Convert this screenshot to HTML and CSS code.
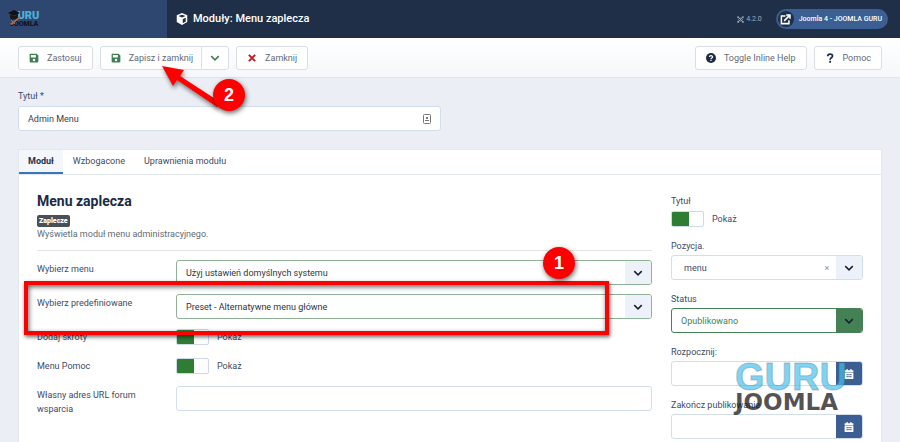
FILE: index.html
```html
<!DOCTYPE html>
<html lang="pl">
<head>
<meta charset="utf-8">
<title>Moduły: Menu zaplecza</title>
<link rel="stylesheet" href="styles.css">
</head>
<body>
<svg class="defs" aria-hidden="true">
  <symbol id="save" viewBox="0 0 16 16"><path fill-rule="evenodd" d="M2 1h10l3 3v9a2 2 0 0 1-2 2H3a2 2 0 0 1-2-2V2a1 1 0 0 1 1-1zm1 2v4h8V3zm5 6a2 2 0 1 0 0 4 2 2 0 0 0 0-4z"/></symbol>
  <symbol id="chevron" viewBox="0 0 16 16"><path d="M2 5l6 6 6-6" fill="none" stroke="currentColor" stroke-width="2.4"/></symbol>
  <symbol id="cross" viewBox="0 0 16 16"><path d="M3 3l10 10M13 3L3 13" stroke="currentColor" stroke-width="3.2"/></symbol>
  <symbol id="calendar" viewBox="0 0 16 16"><path fill-rule="evenodd" d="M4 0h2v2h4V0h2v2h3v3H1V2h3zM1 6h14v10H1zm3 2v2h2V8zm3 0v2h2V8zm3 0v2h2V8zm-6 3v2h2v-2zm3 0v2h2v-2zm3 0v2h2v-2z"/></symbol>
</svg>
<header class="header">
  <a class="logo" href="#" aria-label="Guru Joomla">
    <span class="logo-top">GURU</span><span class="logo-bottom">JOOMLA</span>
    <svg class="logo-cap" viewBox="0 0 16 17"><path d="M0 3l6-3 6 3-6 3z" fill="#111"/><path d="M2 4v4c2 2 6 2 8 0V4L6 6z" fill="#181818"/><path d="M2 14l10-8 1 1-9 8z" fill="#b96b45"/><path d="M3 10l4 4" stroke="#b96b45"/></svg>
  </a>
  <h1 class="page-title"><svg class="cube" viewBox="0 0 16 16"><path fill-rule="evenodd" d="M8 0l7 3v9l-7 4-7-4V3zm0 2.2L3.3 4.1 8 6l4.7-1.9zM9 8v5.5l4-2.2V6.3z"/></svg>Moduły: Menu zaplecza</h1>
  <span class="version"><svg viewBox="0 0 16 16"><path d="M3 3l10 10M13 3L3 13M4 6c-1 2-1 2 0 4M12 6c1 2 1 2 0 4M6 4c2 1 2 1 4 0M6 12c2-1 2-1 4 0" fill="none" stroke="currentColor" stroke-width="2"/><circle cx="2.5" cy="2.5" r="2.2"/><circle cx="13.5" cy="2.5" r="2.2"/><circle cx="2.5" cy="13.5" r="2.2"/><circle cx="13.5" cy="13.5" r="2.2"/></svg>4.2.0</span>
  <a class="site-link" href="#"><span class="site-icon"><svg viewBox="0 0 16 16"><path d="M8 3H2v11h11V9M6 10l8-8M9 1.5h5.5V7" fill="none" stroke="currentColor" stroke-width="2.2"/></svg></span>Joomla 4 - JOOMLA GURU</a>
</header>
<div class="toolbar">
  <button class="btn" type="button"><svg class="icon green"><use href="#save"/></svg>Zastosuj</button>
  <div class="group">
    <button class="btn" type="button"><svg class="icon green"><use href="#save"/></svg>Zapisz i zamknij</button>
    <button class="btn drop" type="button" aria-label="Więcej"><svg class="icon green"><use href="#chevron"/></svg></button>
  </div>
  <button class="btn" type="button"><svg class="icon red"><use href="#cross"/></svg>Zamknij</button>
  <button class="btn push" type="button"><svg class="icon navy" viewBox="0 0 16 16"><circle cx="8" cy="8" r="8"/><path d="M5.5 6.5C5.5 3.4 10.5 3.4 10.5 6.3 10.5 8 8 7.8 8 9.6M8 10.8v2" fill="none" stroke="#fff" stroke-width="2"/></svg>Toggle Inline Help</button>
  <button class="btn" type="button"><svg class="icon navy" viewBox="0 0 16 16"><path d="M4.4 5.2C4.4 .6 12 .8 12 4.8 12 7.8 8.2 7.2 8.2 10.6M8.2 12.4v3" fill="none" stroke="currentColor" stroke-width="2.8"/></svg>Pomoc</button>
</div>
<main class="main">
  <div class="title-field">
    <label for="title">Tytuł *</label>
    <div class="control">
      <input id="title" type="text" value="Admin Menu">
      <svg class="card-icon" viewBox="0 0 8 10"><rect x=".5" y=".5" width="7" height="9" rx="1" fill="#fff" stroke="#777"/><path d="M3 3h2v2H3zM2 6h4v1H2z" fill="#777"/></svg>
    </div>
  </div>
  <section class="card">
    <nav class="tabs">
      <button class="tab active" type="button">Moduł</button>
      <button class="tab" type="button">Wzbogacone</button>
      <button class="tab" type="button">Uprawnienia modułu</button>
    </nav>
    <div class="columns">
      <div class="fields">
        <h2>Menu zaplecza</h2>
        <span class="badge">Zaplecze</span>
        <p class="description">Wyświetla moduł menu administracyjnego.</p>
        <div class="row">
          <label for="menu">Wybierz menu</label>
          <div class="control valid"><select id="menu"><option>Użyj ustawień domyślnych systemu</option></select><span class="arrow"><svg><use href="#chevron"/></svg></span></div>
        </div>
        <div class="row">
          <label for="preset">Wybierz predefiniowane</label>
          <div class="control valid"><select id="preset"><option>Preset - Alternatywne menu główne</option></select><span class="arrow"><svg><use href="#chevron"/></svg></span></div>
        </div>
        <div class="row short">
          <label for="shortcuts">Dodaj skróty</label>
          <div class="toggle"><input id="shortcuts" type="checkbox" checked><span>Pokaż</span></div>
        </div>
        <div class="row short">
          <label for="help">Menu Pomoc</label>
          <div class="toggle"><input id="help" type="checkbox" checked><span>Pokaż</span></div>
        </div>
        <div class="row">
          <label for="forum">Własny adres URL forum wsparcia</label>
          <div class="control"><input id="forum" type="text"></div>
        </div>
      </div>
      <aside class="side">
        <div class="side-field">
          <label for="show">Tytuł</label>
          <div class="toggle"><input id="show" type="checkbox" checked><span>Pokaż</span></div>
        </div>
        <div class="side-field">
          <label for="position">Pozycja.</label>
          <div class="control position"><select id="position"><option>menu</option></select><button class="clear" type="button" aria-label="Wyczyść">×</button><span class="arrow"><svg><use href="#chevron"/></svg></span></div>
        </div>
        <div class="side-field">
          <label for="status">Status</label>
          <div class="control status"><select id="status"><option>Opublikowano</option></select><span class="arrow"><svg><use href="#chevron"/></svg></span></div>
        </div>
        <div class="side-field">
          <label for="start">Rozpocznij:</label>
          <div class="control date"><input id="start" type="text"><button type="button" aria-label="Kalendarz"><svg><use href="#calendar"/></svg></button></div>
        </div>
        <div class="side-field">
          <label for="end">Zakończ publikowanie</label>
          <div class="control date"><input id="end" type="text"><button type="button" aria-label="Kalendarz"><svg><use href="#calendar"/></svg></button></div>
        </div>
        <div class="watermark"><span class="mark-top">GURU</span><span class="mark-bottom">JOOMLA</span></div>
      </aside>
    </div>
  </section>
</main>
<div class="highlight"></div>
<svg class="pointer" viewBox="0 0 70 50"><path d="M2 4l22 4-4 6 40 26-3 5-40-27-4 6z" fill="#f00"/></svg>
<span class="step one">1</span>
<span class="step two">2</span>
</body>
</html>
```
FILE: styles.css
```css
* { box-sizing: border-box; }
body {
  position: relative;
  display: flex;
  flex-direction: column;
  min-height: 100vh;
  margin: 0;
  background: #ebeff5;
  color: #3d4a66;
  font: 9px/14px Roboto, "Liberation Sans", sans-serif;
}
button, input, select { font: inherit; color: inherit; margin: 0; }
svg { fill: currentColor; }
a { color: inherit; text-decoration: none; }
.defs { position: absolute; width: 0; height: 0; }

.header { display: flex; align-items: center; height: 38px; padding-right: 12px; background: #1f2f48; color: #fff; }
.logo { position: relative; display: flex; flex-direction: column; justify-content: center; align-self: stretch; width: 167px; padding-left: 10px; background: #2d4770; font-weight: 900; }
.logo-top { color: #4fb0dc; font-size: 11px; line-height: 9px; }
.logo-bottom { color: #10151e; font-size: 7px; line-height: 8px; }
.logo-cap { position: absolute; left: 8px; top: 10px; width: 16px; height: 17px; }
.page-title { display: flex; align-items: center; gap: 5px; flex: 1; margin: 0; padding-left: 9px; font-size: 11px; font-weight: 500; }
.cube { width: 12px; height: 12px; }
.version { display: flex; align-items: center; gap: 2px; margin-right: 14px; color: #a5acb7; font-size: 7px; }
.version svg { width: 7px; height: 7px; }
.site-link { display: flex; align-items: center; gap: 5px; height: 20px; padding: 0 6px 0 2px; border-radius: 10px; background: #3b5f92; font-size: 7px; font-weight: 500; }
.site-icon { display: grid; place-items: center; width: 16px; height: 16px; border-radius: 50%; background: #1f2f48; }
.site-icon svg { width: 11px; height: 11px; }

.toolbar { display: flex; align-items: center; gap: 7px; height: 40px; padding: 0 18px; background: linear-gradient(#fff, #f5f7fa); border-bottom: 1px solid #dce5ef; }
.btn { display: flex; align-items: center; gap: 8px; height: 24px; padding: 0 10px; border: 1px solid #d9dee6; border-radius: 3px; background: #fff; color: #626a75; white-space: nowrap; }
.icon { width: 10px; height: 10px; }
.green { color: #3d7f4f; }
.red { color: #c91820; }
.navy { color: #1b2b45; }
.push { margin-left: auto; }
.group { display: flex; }
.group .btn:first-child { padding-right: 8px; border-radius: 3px 0 0 3px; }
.group .drop { padding: 0 8px; margin-left: -1px; border-radius: 0 3px 3px 0; }

.main { display: flex; flex: 1; flex-direction: column; padding: 11px 18px 0; }
.title-field { display: flex; flex-direction: column; gap: 3px; width: 49%; margin-bottom: 18px; }
.control { position: relative; display: flex; min-width: 0; height: 25px; overflow: hidden; border: 1px solid #d3deeb; border-radius: 3px; background: #fff; }
.control input, .control select { flex: 1; min-width: 0; width: 100%; padding: 0 9px; border: 0; outline: 0; background: transparent; appearance: none; }
.title-field .control { align-items: center; padding-right: 9px; }
.card-icon { width: 8px; height: 10px; }
#title { color: #363e49; }
.arrow { display: grid; place-items: center; width: 26px; background: #edf1f9; color: #172033; pointer-events: none; }
.arrow svg { width: 10px; height: 10px; }

.card { flex: 1; border: 1px solid #e3e8ef; border-bottom: 0; background: #fff; }
.tabs { display: flex; gap: 1px; height: 25px; border-bottom: 1px solid #e3e8ef; }
.tab { padding: 0 9px; border: 0; border-bottom: 2px solid transparent; background: #fff; }
.tab.active { border-color: #3975bd; background: #f3f6fa; color: #22334f; font-weight: 700; }
.columns { display: grid; grid-template-columns: minmax(0, 1fr) 192px; gap: 19px; padding: 19px 18px 0; }
h2 { margin: 0 0 7px; color: #1b2b45; font-size: 14px; line-height: 14px; }
.badge { display: block; width: max-content; padding: 0 2px; border-radius: 2px; background: #495057; color: #fff; font-size: 7px; font-weight: 900; line-height: 12px; }
.description { margin: 0 0 9px; padding-bottom: 9px; border-bottom: 1px solid #e2e4e7; color: #626a75; }
.row { display: grid; grid-template-columns: 120px minmax(0, 1fr); gap: 19px; margin-bottom: 9px; }
.row label { padding-top: 2px; }
.row.short { height: 20px; }
.row .control select { color: #30353c; }
.control.valid { border-color: #8fb196; }
.toggle { display: flex; align-items: center; gap: 8px; height: 17px; }
.toggle input { width: 33px; height: 16px; border: 1px solid #cbd9ea; border-radius: 2px; appearance: none; background: linear-gradient(90deg, #2f7d32 17px, #fff 17px); }
.side { position: relative; display: flex; flex-direction: column; gap: 12px; }
.side-field { display: flex; flex-direction: column; gap: 2px; }
.control.position select { padding-left: 12px; }
.clear { width: 18px; padding: 0; border: 0; background: none; color: #8b919b; }
.control.status { border-color: #448154; color: #448154; }
.control.status .arrow { background: #448154; }
.date button { display: grid; place-items: center; width: 26px; padding: 0; border: 0; background: #3b5f92; color: #fff; }
.date svg { width: 10px; height: 10px; }

.watermark { position: absolute; left: 64px; top: 167px; display: flex; flex-direction: column; font-family: "Liberation Sans", sans-serif; font-weight: 700; pointer-events: none; }
.mark-top { color: #47bfebb0; font-size: 38px; line-height: 32px; -webkit-text-stroke: 1px #44718055; }
.mark-bottom { color: #111b; font: 700 23px/18px "DejaVu Sans", sans-serif; }
.highlight { position: absolute; left: 24px; top: 281px; width: 585px; height: 54px; border: 4px solid #f00; box-shadow: 1px 2px 4px #0009, inset 1px 2px 5px #0009; pointer-events: none; }
.step { position: absolute; display: grid; place-items: center; width: 32px; height: 32px; border-radius: 50%; background: #f00; color: #fff; font: 700 18px/28px "Liberation Sans", sans-serif; box-shadow: 1px 2px 5px #0009; }
.step.one { left: 543px; top: 247px; }
.step.two { left: 213px; top: 79px; }
.pointer { position: absolute; left: 160px; top: 62px; width: 70px; height: 50px; filter: drop-shadow(1px 3px 2px #0007); pointer-events: none; }
```
